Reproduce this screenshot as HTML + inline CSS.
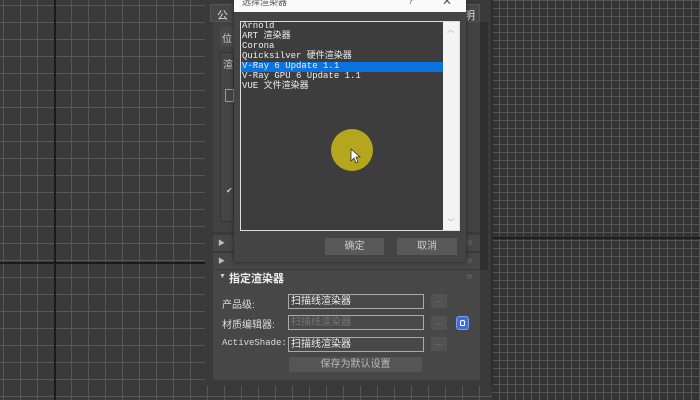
<!DOCTYPE html>
<html><head><meta charset="utf-8"><style>
*{margin:0;padding:0;box-sizing:border-box}
body{width:700px;height:400px;overflow:hidden;position:relative;background:#393939;font-family:"Liberation Sans","Noto Sans CJK SC",sans-serif}
.abs{position:absolute}
#gridL{left:0;top:0;width:700px;height:400px;
background:
linear-gradient(#1a1a1a,#1a1a1a) 0 262px/700px 2px no-repeat,
linear-gradient(#1a1a1a,#1a1a1a) 54px 0/2px 400px no-repeat,
repeating-linear-gradient(90deg,transparent 0 3px,#575757 3px 4px,transparent 4px 17px),
repeating-linear-gradient(0deg,transparent 0 3px,#575757 3px 4px,transparent 4px 17px),#3a3a3a}
#gridR{left:492px;top:0;width:208px;height:400px;
background:
linear-gradient(#1e1e1e,#1e1e1e) 0 237px/208px 2px no-repeat,
repeating-linear-gradient(90deg,transparent 0 7px,#555 7px 8px),
repeating-linear-gradient(0deg,transparent 0 7px,#555 7px 8px),#333}
.mono{font-family:"Liberation Mono","Noto Sans CJK SC",monospace}
.field{position:absolute;left:288px;width:136px;height:15px;border:1px solid #aaa;background:#484848;color:#eee;font-size:10px;line-height:13px;padding-left:2px}
.dots{position:absolute;left:431px;width:16px;height:14px;background:#525252;color:#888;font-size:8px;text-align:center;line-height:12px}
.lbl{position:absolute;left:222px;color:#ddd;font-size:10px}
.sq{position:absolute;width:5px;height:5px;background:#555}
</style></head><body>
<div id="gridL" class="abs"></div>
<div id="gridR" class="abs"></div>
<!-- panel -->
<div class="abs" style="left:205px;top:0;width:288px;height:386px;background:#3a3a3a;border-right:2px solid #2c2c2c"></div>
<div class="abs" style="left:210px;top:4px;width:26px;height:18px;background:#474747;border:1px solid #555;color:#ddd;font-size:11px;padding:2px 0 0 6px">公</div>
<div class="abs" style="left:460px;top:4px;width:20px;height:18px;background:#474747;border:1px solid #555;color:#ddd;font-size:11px;padding:2px 0 0 3px">明</div>
<div class="abs" style="left:213px;top:22px;width:267px;height:210px;background:#424242"></div>
<div class="abs" style="left:220px;top:27px;width:14px;height:20px;background:#4a4a4a;color:#ccc;font-size:10px;padding:3px 0 0 2px">位</div>
<div class="abs" style="left:220px;top:52px;width:14px;height:170px;background:#454545;border:1px solid #353535;color:#ccc;font-size:10px;padding:3px 0 0 2px">渲</div>
<div class="abs" style="left:225px;top:89px;width:9px;height:13px;border:1px solid #999"></div>
<div class="abs" style="left:226px;top:186px;color:#ccc;font-size:8px">✔</div>
<div class="abs" style="left:480px;top:22px;width:8px;height:248px;background:#2f2f2f"></div>
<!-- rollouts -->
<div class="abs" style="left:213px;top:235px;width:267px;height:16px;background:#474747"></div>
<div class="abs" style="left:213px;top:253px;width:267px;height:16px;background:#474747"></div>
<div class="abs" style="left:218px;top:238px;color:#bbb;font-size:7px">▶</div>
<div class="abs" style="left:218px;top:256px;color:#bbb;font-size:7px">▶</div>
<div class="sq" style="left:467px;top:240px"></div>
<div class="sq" style="left:467px;top:258px"></div>
<div class="abs" style="left:213px;top:270px;width:267px;height:110px;background:#474747"></div>
<div class="abs" style="left:219px;top:273px;color:#ccc;font-size:7px">▼</div>
<div class="abs" style="left:229px;top:270px;color:#eee;font-size:11px;font-weight:bold">指定渲染器</div>
<div class="sq" style="left:467px;top:274px"></div>
<div class="lbl" style="top:296px">产品级:</div>
<div class="lbl" style="top:316px">材质编辑器:</div>
<div class="lbl mono" style="top:338px;font-size:9px">ActiveShade:</div>
<div class="field" style="top:294px">扫描线渲染器</div>
<div class="field" style="top:315px;color:#777;background:#4a4a4a">扫描线渲染器</div>
<div class="field" style="top:337px">扫描线渲染器</div>
<div class="dots" style="top:294px">...</div>
<div class="dots" style="top:316px">...</div>
<div class="dots" style="top:337px">...</div>
<div class="abs" style="left:456px;top:316px;width:13px;height:14px;background:#3e6fd8;border-radius:3px;border:1px solid #7aa0f0"><div style="position:absolute;left:3px;top:3px;width:5px;height:6px;border:1.5px solid #fff;border-radius:2px 2px 1px 1px"></div></div>
<div class="abs" style="left:289px;top:357px;width:133px;height:15px;background:#555;color:#bbb;font-size:10px;text-align:center;line-height:15px">保存为默认设置</div>
<!-- dialog -->
<div class="abs" style="left:234px;top:0;width:232px;height:262px;background:#444;box-shadow:0 0 4px #222"></div>
<div class="abs" style="left:234px;top:0;width:232px;height:12px;background:#fafafa;color:#555;font-size:9px"><span style="position:absolute;left:8px;top:-5px">选择渲染器</span><span style="position:absolute;left:174px;top:-4px">?</span><span style="position:absolute;left:208px;top:-6px;font-size:12px">✕</span></div>
<div class="abs" style="left:240px;top:21px;width:220px;height:210px;border:1px solid #ddd;background:#3d3d3d"></div>
<div class="abs" style="left:443px;top:22px;width:16px;height:208px;background:#f4f4f4;color:#aaa;font-size:8px;text-align:center"><div style="margin-top:2px">︿</div><div style="position:absolute;bottom:2px;width:16px">﹀</div></div>
<div class="abs" style="left:241px;top:62px;width:202px;height:10px;background:#0b73e0"></div>
<div class="abs mono" style="left:242px;top:21px;color:#eee;font-size:9px;line-height:10px;white-space:pre">Arnold
ART 渲染器
Corona
Quicksilver 硬件渲染器
V-Ray 6 Update 1.1
V-Ray GPU 6 Update 1.1
VUE 文件渲染器</div>
<div class="abs" style="left:325px;top:238px;width:59px;height:17px;background:#595959;color:#ccc;font-size:10px;text-align:center;line-height:17px">确定</div>
<div class="abs" style="left:397px;top:238px;width:60px;height:17px;background:#595959;color:#ccc;font-size:10px;text-align:center;line-height:17px">取消</div>
<!-- cursor highlight -->
<div class="abs" style="left:331px;top:129px;width:42px;height:42px;border-radius:50%;background:#b5a61e"></div>
<svg class="abs" style="left:350px;top:148px" width="12" height="16" viewBox="0 0 12 16"><path d="M1 1 L1 13 L4 10 L6 15 L8 14 L6 9 L10 9 Z" fill="#fff" stroke="#333" stroke-width="0.8"/></svg>
</body></html>
